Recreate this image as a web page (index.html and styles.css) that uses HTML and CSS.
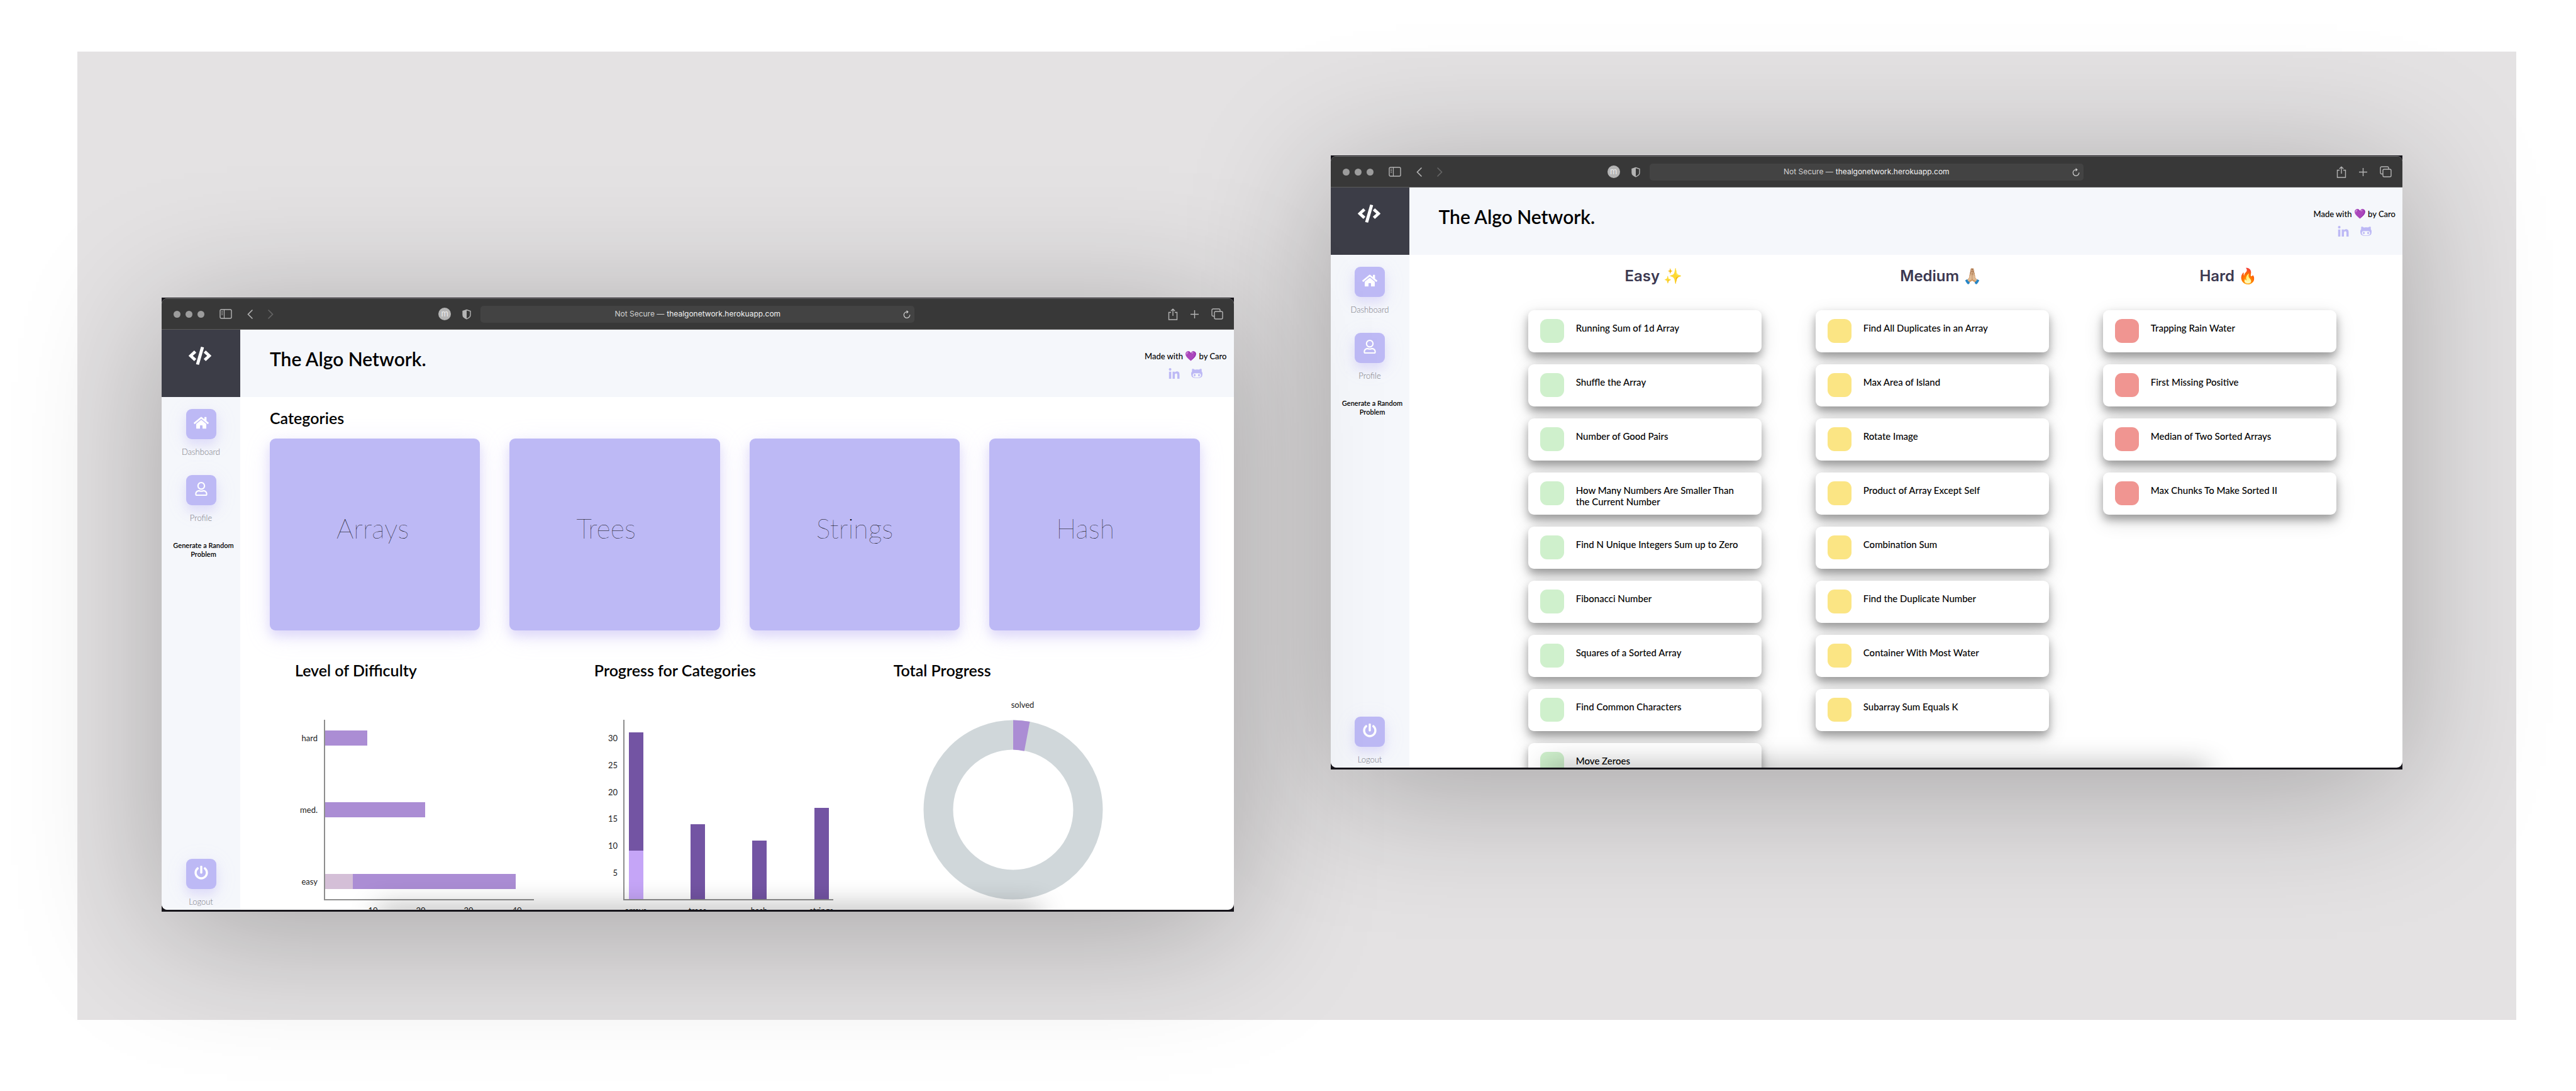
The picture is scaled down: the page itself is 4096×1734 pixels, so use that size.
FILE: index.html
```html
<!DOCTYPE html>
<html lang="en">
<head>
<meta charset="utf-8">
<title>The Algo Network</title>
<link rel="stylesheet" href="styles.css">
</head>
<body>
<svg class="sprite" aria-hidden="true">
  <symbol id="i-panel" viewBox="0 0 20 16"><rect x="1" y="1" width="18" height="14" rx="2" fill="none" stroke="currentColor" stroke-width="1.4"/><path d="M7.5 1v14M3 4h2.4M3 6.5h2.4M3 9h2.4" fill="none" stroke="currentColor" stroke-width="1.2"/></symbol>
  <symbol id="i-back" viewBox="0 0 9 15"><path d="M8 1L1.500 7.500 8 14" fill="none" stroke="currentColor" stroke-width="1.6" stroke-linecap="round"/></symbol>
  <symbol id="i-forward" viewBox="0 0 9 15"><path d="M1 1l6.500 6.500L1 14" fill="none" stroke="currentColor" stroke-width="1.6" stroke-linecap="round"/></symbol>
  <symbol id="i-shield" viewBox="0 0 14 16"><path d="M7 1l6 2v6c0 3-2.500 5-6 6.300C3.500 14 1 12 1 9V3z" fill="none" stroke="currentColor" stroke-width="1.4"/><path d="M7 1v14.300C3.500 14 1 12 1 9V3z" fill="currentColor"/></symbol>
  <symbol id="i-reload" viewBox="0 0 12 13"><path d="M10.800 7.300a4.800 4.800 0 1 1-4.800-4.600h1.500M5.500.6l2.300 2.100-2.300 2.200" fill="none" stroke="currentColor" stroke-width="1.200"/></symbol>
  <symbol id="i-share" viewBox="0 0 16 19"><path d="M5 6.500H1.500v11.500h13V6.500H11M8 12V1.300M4.800 4.300L8 1.200l3.200 3.100" fill="none" stroke="currentColor" stroke-width="1.400"/></symbol>
  <symbol id="i-plus" viewBox="0 0 13 13"><path d="M6.500 0v13M0 6.500h13" stroke="currentColor" stroke-width="1.400"/></symbol>
  <symbol id="i-tabs" viewBox="0 0 19 18"><rect x="5" y="5" width="13" height="12" rx="2" fill="none" stroke="currentColor" stroke-width="1.400"/><path d="M5 12.500H3a2 2 0 0 1-2-2V3a2 2 0 0 1 2-2h9a2 2 0 0 1 2 2v2" fill="none" stroke="currentColor" stroke-width="1.400"/></symbol>
  <symbol id="i-code" viewBox="0 0 640 512"><path fill="currentColor" d="M278.9 511.5l-61-17.7c-6.4-1.8-10-8.5-8.2-14.9L346.2 8.7c1.8-6.4 8.5-10 14.9-8.2l61 17.7c6.4 1.8 10 8.5 8.2 14.9L293.8 503.3c-1.9 6.4-8.5 10.1-14.9 8.2zm-114-112.2l43.5-46.4c4.6-4.9 4.3-12.7-.8-17.2L117 256l90.6-79.7c5.1-4.5 5.5-12.3.8-17.2l-43.5-46.4c-4.5-4.8-12.1-5.1-17-.5L3.8 247.2c-5.1 4.7-5.1 12.8 0 17.5l144.1 135.1c4.9 4.6 12.5 4.4 17-.5zm327.2.6l144.1-135.1c5.1-4.7 5.1-12.8 0-17.5L492.1 112.1c-4.8-4.5-12.4-4.3-17 .5L431.6 159c-4.6 4.9-4.3 12.7.8 17.2L523 256l-90.6 79.7c-5.1 4.5-5.5 12.3-.8 17.2l43.5 46.4c4.500 4.900 12.100 5.100 17 .6z"/></symbol>
  <symbol id="i-home" viewBox="0 0 576 512"><path fill="currentColor" d="M280.37 148.26L96 300.11V464a16 16 0 0 0 16 16l112.06-.29a16 16 0 0 0 15.92-16V368a16 16 0 0 1 16-16h64a16 16 0 0 1 16 16v95.64a16 16 0 0 0 16 16.05L464 480a16 16 0 0 0 16-16V300L295.67 148.26a12.19 12.19 0 0 0-15.3 0zM571.6 251.47L488 182.56V44.05a12 12 0 0 0-12-12h-56a12 12 0 0 0-12 12v72.61L318.47 43a48 48 0 0 0-61 0L4.34 251.47a12 12 0 0 0-1.6 16.9l25.5 31A12 12 0 0 0 45.15 301l235.22-193.74a12.19 12.19 0 0 1 15.3 0L530.9 301a12 12 0 0 0 16.9-1.6l25.5-31a12 12 0 0 0-1.7-16.93z"/></symbol>
  <symbol id="i-user" viewBox="0 0 448 512"><path fill="currentColor" d="M313.6 304c-28.7 0-42.5 16-89.6 16-47.1 0-60.8-16-89.6-16C60.2 304 0 364.2 0 438.4V464c0 26.5 21.5 48 48 48h352c26.5 0 48-21.5 48-48v-25.6c0-74.2-60.2-134.4-134.4-134.4zM400 464H48v-25.6c0-47.6 38.8-86.4 86.4-86.4 14.6 0 38.3 16 89.6 16 51.7 0 74.9-16 89.6-16 47.6 0 86.4 38.8 86.4 86.4V464zM224 288c79.5 0 144-64.5 144-144S303.5 0 224 0 80 64.5 80 144s64.5 144 144 144zm0-240c52.9 0 96 43.1 96 96s-43.1 96-96 96-96-43.1-96-96 43.1-96 96-96z"/></symbol>
  <symbol id="i-power" viewBox="0 0 512 512"><path fill="currentColor" d="M400 54.1c63 45 104 118.6 104 201.9 0 136.8-110.8 247.7-247.5 248C120 504.3 8.2 393 8 256.4 7.9 173.1 48.9 99.3 111.8 54.2c11.7-8.3 28-4.8 35 7.7L162.6 90c5.9 10.5 3.1 23.8-6.6 31-41.5 30.8-68 79.6-68 134.9-.1 92.3 74.5 168.1 168 168.1 91.6 0 168.6-74.2 168-169.1-.3-51.8-24.7-101.8-68.1-134-9.7-7.2-12.4-20.5-6.5-30.9l15.8-28.1c7-12.4 23.2-16.1 34.8-7.8zM296 264V24c0-13.3-10.7-24-24-24h-32c-13.3 0-24 10.7-24 24v240c0 13.3 10.7 24 24 24h32c13.3 0 24-10.7 24-24z"/></symbol>
  <symbol id="i-linkedin" viewBox="0 0 448 448"><path fill="currentColor" d="M100.28 448H7.4V148.9h92.88zM53.79 108.1C24.09 108.1 0 83.5 0 53.8a53.79 53.79 0 0 1 107.58 0c0 29.7-24.1 54.3-53.79 54.3zM447.9 448h-92.68V302.4c0-34.7-.7-79.2-48.29-79.2-48.29 0-55.69 37.7-55.69 76.7V448h-92.78V148.9h89.08v40.8h1.3c12.4-23.5 42.69-48.3 87.88-48.3 94 0 111.28 61.9 111.28 142.3V448z"/></symbol>
  <symbol id="i-github" viewBox="0 32 480 448"><path fill="currentColor" d="M186.1 328.7c0 20.9-10.9 55.1-36.7 55.1s-36.7-34.2-36.7-55.1 10.9-55.1 36.7-55.1 36.7 34.2 36.7 55.1zM480 278.2c0 31.9-3.2 65.7-17.5 95-37.9 76.6-142.1 74.8-216.7 74.8-75.8 0-186.2 2.7-225.6-74.8-14.6-29-20.2-63.1-20.2-95 0-41.9 13.9-81.5 41.5-113.6-5.2-15.8-7.7-32.4-7.7-48.8 0-21.5 4.9-32.3 14.6-51.8 45.3 0 74.3 9 108.8 36 29-6.9 58.8-10 88.7-10 27 0 54.2 2.900 80.4 9.200 34-26.700 63-35.200 107.800-35.200 9.800 19.500 14.600 30.300 14.600 51.800 0 16.400-2.600 32.700-7.700 48.200 27.500 32.400 39 72.300 39 114.200zm-64.300 50.500c0-43.900-26.700-82.600-73.500-82.600-18.900 0-37 3.400-56 6-14.900 2.300-29.800 3.200-45.100 3.200-15.200 0-30.100-.9-45.100-3.200-18.700-2.600-37-6-56-6-46.800 0-73.500 38.700-73.500 82.600 0 87.800 80.400 101.300 150.400 101.300h48.200c70.300 0 150.600-13.400 150.600-101.300zm-82.600-55.100c-25.800 0-36.700 34.200-36.700 55.100s10.900 55.100 36.700 55.100 36.700-34.200 36.700-55.100-10.900-55.100-36.700-55.100z"/></symbol>
</svg>

<main class="board">

  <section class="window window-dashboard">
    <div class="browser">
      <div class="toolbar">
        <div class="tools tools-left">
          <span class="lights"><i></i><i></i><i></i></span>
          <button class="tool tool-panel" aria-label="Show sidebar"><svg width="20" height="16"><use href="#i-panel"/></svg></button>
          <button class="tool tool-arrow" aria-label="Back"><svg width="9" height="15"><use href="#i-back"/></svg></button>
          <button class="tool tool-arrow tool-dim" aria-label="Forward" disabled><svg width="9" height="15"><use href="#i-forward"/></svg></button>
          <span class="extension">m</span>
          <button class="tool tool-shield" aria-label="Privacy report"><svg width="14" height="17"><use href="#i-shield"/></svg></button>
        </div>
        <div class="address">
          <label for="url-dashboard">Not Secure —</label>
          <input id="url-dashboard" type="text" value="thealgonetwork.herokuapp.com">
          <button class="tool reload" aria-label="Reload"><svg width="12" height="13"><use href="#i-reload"/></svg></button>
        </div>
        <div class="tools tools-right">
          <button class="tool" aria-label="Share"><svg width="16" height="19"><use href="#i-share"/></svg></button>
          <button class="tool" aria-label="New tab"><svg width="13" height="13"><use href="#i-plus"/></svg></button>
          <button class="tool" aria-label="Tab overview"><svg width="19" height="18"><use href="#i-tabs"/></svg></button>
        </div>
      </div>
      <div class="app">
        <a class="logo" href="#" aria-label="Home"><svg width="36" height="29"><use href="#i-code"/></svg></a>
        <header class="header">
          <h1>The Algo Network.</h1>
          <div class="credits">
            <p>Made with <span class="emoji">💜</span> by Caro</p>
            <div class="social">
              <a href="#" aria-label="LinkedIn"><svg width="18" height="17"><use href="#i-linkedin"/></svg></a>
              <a href="#" aria-label="GitHub"><svg width="18" height="17"><use href="#i-github"/></svg></a>
            </div>
          </div>
        </header>
        <nav class="sidebar">
          <a class="nav-item" href="#"><span class="nav-icon"><svg width="24" height="22"><use href="#i-home"/></svg></span>Dashboard</a>
          <a class="nav-item" href="#"><span class="nav-icon"><svg width="20" height="22"><use href="#i-user"/></svg></span>Profile</a>
          <a class="random" href="#">Generate a Random Problem</a>
          <a class="nav-item nav-logout" href="#"><span class="nav-icon"><svg width="22" height="22"><use href="#i-power"/></svg></span>Logout</a>
        </nav>
        <div class="content dashboard">
          <h2>Categories</h2>
          <div class="categories">
            <a class="category" href="#">Arrays</a>
            <a class="category" href="#">Trees</a>
            <a class="category" href="#">Strings</a>
            <a class="category" href="#">Hash</a>
          </div>
          <div class="charts">
            <section>
              <h2>Level of Difficulty</h2>
              <svg class="chart" width="475" height="380">
                <g class="bar-total"><rect x="47" y="82" width="68" height="24"/><rect x="47" y="196" width="160" height="24"/><rect x="92" y="310" width="259" height="24"/></g>
                <rect class="bar-solved" x="47" y="310" width="45" height="24"/>
                <path class="axis" d="M47 65V351H380"/>
                <g class="end"><text x="36" y="99">hard</text><text x="36" y="213">med.</text><text x="36" y="327">easy</text></g>
                <g class="mid"><text x="124" y="373">10</text><text x="200" y="373">20</text><text x="276" y="373">30</text><text x="353" y="373">40</text></g>
              </svg>
            </section>
            <section>
              <h2>Progress for Categories</h2>
              <svg class="chart" width="475" height="380">
                <g class="col-total"><rect x="55" y="85" width="23" height="188"/><rect x="153" y="231" width="23" height="120"/><rect x="251" y="257" width="23" height="94"/><rect x="350" y="205" width="23" height="146"/></g>
                <rect class="col-solved" x="55" y="273" width="23" height="78"/>
                <path class="axis" d="M47 65V351H380"/>
                <g class="end"><text x="37" y="99">30</text><text x="37" y="142">25</text><text x="37" y="185">20</text><text x="37" y="227">15</text><text x="37" y="270">10</text><text x="37" y="313">5</text></g>
                <g class="mid"><text x="66" y="373">arrays</text><text x="164" y="373">trees</text><text x="262" y="373">hash</text><text x="361" y="373">strings</text></g>
              </svg>
            </section>
            <section>
              <h2>Total Progress</h2>
              <svg class="chart" width="475" height="380">
                <circle class="ring" cx="190" cy="208" r="119"/>
                <path class="slice" d="M190 65.500A142.500 142.500 0 0 1 216.500 68L207.700 114.700A95.500 95.500 0 0 0 190 112.500Z"/>
                <g class="mid"><text x="205" y="46">solved</text></g>
              </svg>
            </section>
          </div>
        </div>
      </div>
      <div class="dock"></div>
    </div>
  </section>

  <section class="window window-problems">
    <div class="browser">
      <div class="toolbar">
        <div class="tools tools-left">
          <span class="lights"><i></i><i></i><i></i></span>
          <button class="tool tool-panel" aria-label="Show sidebar"><svg width="20" height="16"><use href="#i-panel"/></svg></button>
          <button class="tool tool-arrow" aria-label="Back"><svg width="9" height="15"><use href="#i-back"/></svg></button>
          <button class="tool tool-arrow tool-dim" aria-label="Forward" disabled><svg width="9" height="15"><use href="#i-forward"/></svg></button>
          <span class="extension">m</span>
          <button class="tool tool-shield" aria-label="Privacy report"><svg width="14" height="17"><use href="#i-shield"/></svg></button>
        </div>
        <div class="address">
          <label for="url-problems">Not Secure —</label>
          <input id="url-problems" type="text" value="thealgonetwork.herokuapp.com">
          <button class="tool reload" aria-label="Reload"><svg width="12" height="13"><use href="#i-reload"/></svg></button>
        </div>
        <div class="tools tools-right">
          <button class="tool" aria-label="Share"><svg width="16" height="19"><use href="#i-share"/></svg></button>
          <button class="tool" aria-label="New tab"><svg width="13" height="13"><use href="#i-plus"/></svg></button>
          <button class="tool" aria-label="Tab overview"><svg width="19" height="18"><use href="#i-tabs"/></svg></button>
        </div>
      </div>
      <div class="app">
        <a class="logo" href="#" aria-label="Home"><svg width="36" height="29"><use href="#i-code"/></svg></a>
        <header class="header">
          <h1>The Algo Network.</h1>
          <div class="credits">
            <p>Made with <span class="emoji">💜</span> by Caro</p>
            <div class="social">
              <a href="#" aria-label="LinkedIn"><svg width="18" height="17"><use href="#i-linkedin"/></svg></a>
              <a href="#" aria-label="GitHub"><svg width="18" height="17"><use href="#i-github"/></svg></a>
            </div>
          </div>
        </header>
        <nav class="sidebar">
          <a class="nav-item" href="#"><span class="nav-icon"><svg width="24" height="22"><use href="#i-home"/></svg></span>Dashboard</a>
          <a class="nav-item" href="#"><span class="nav-icon"><svg width="20" height="22"><use href="#i-user"/></svg></span>Profile</a>
          <a class="random" href="#">Generate a Random Problem</a>
          <a class="nav-item nav-logout" href="#"><span class="nav-icon"><svg width="22" height="22"><use href="#i-power"/></svg></span>Logout</a>
        </nav>
        <div class="content problems">
          <section class="level level-easy">
            <h2>Easy <span class="emoji">✨</span></h2>
            <ul>
              <li><a href="#">Running Sum of 1d Array</a></li>
              <li><a href="#">Shuffle the Array</a></li>
              <li><a href="#">Number of Good Pairs</a></li>
              <li><a href="#">How Many Numbers Are Smaller Than the Current Number</a></li>
              <li><a href="#">Find N Unique Integers Sum up to Zero</a></li>
              <li><a href="#">Fibonacci Number</a></li>
              <li><a href="#">Squares of a Sorted Array</a></li>
              <li><a href="#">Find Common Characters</a></li>
              <li><a href="#">Move Zeroes</a></li>
            </ul>
          </section>
          <section class="level level-medium">
            <h2>Medium <span class="emoji">🙏🏼</span></h2>
            <ul>
              <li><a href="#">Find All Duplicates in an Array</a></li>
              <li><a href="#">Max Area of Island</a></li>
              <li><a href="#">Rotate Image</a></li>
              <li><a href="#">Product of Array Except Self</a></li>
              <li><a href="#">Combination Sum</a></li>
              <li><a href="#">Find the Duplicate Number</a></li>
              <li><a href="#">Container With Most Water</a></li>
              <li><a href="#">Subarray Sum Equals K</a></li>
            </ul>
          </section>
          <section class="level level-hard">
            <h2>Hard <span class="emoji">🔥</span></h2>
            <ul>
              <li><a href="#">Trapping Rain Water</a></li>
              <li><a href="#">First Missing Positive</a></li>
              <li><a href="#">Median of Two Sorted Arrays</a></li>
              <li><a href="#">Max Chunks To Make Sorted II</a></li>
            </ul>
          </section>
        </div>
      </div>
      <div class="dock"></div>
    </div>
  </section>

</main>
</body>
</html>
```

FILE: styles.css
```css
* { box-sizing: border-box; }

body {
  margin: 0;
  padding: 82px 95px 112px 123px;
  background: #fff;
  color: #000;
  font-family: Lato, "Liberation Sans", sans-serif;
  overflow-x: hidden;
}

h1, h2, p, ul { margin: 0; padding: 0; }
ul { list-style: none; }
a { color: inherit; text-decoration: none; }
button { margin: 0; padding: 0; border: 0; background: none; color: inherit; }
svg { display: block; }
.sprite { position: absolute; width: 0; height: 0; }

/* Board with the two windows */
.board {
  display: grid;
  grid-template-columns: 1fr 1fr;
  gap: 154px;
  align-items: start;
  padding: 165px 181px 172px 134px;
  background: #e4e2e3;
}

.window {
  aspect-ratio: 1704 / 976;
  padding: 1px 0 3px;
  background: #17151b;
  box-shadow: 0 30px 210px rgba(0, 0, 0, 0.28);
}

.window-dashboard {
  position: relative;
  z-index: 1;
  margin-top: 226px;
}

.browser {
  position: relative;
  display: flex;
  flex-direction: column;
  height: 100%;
  border-radius: 9px;
  background: #fff;
  overflow: hidden;
}

/* Browser toolbar */
.toolbar {
  display: grid;
  grid-template-columns: 1fr 690px 1fr;
  align-items: center;
  flex: none;
  height: 50px;
  border-top: 1px solid #757575;
  border-bottom: 1px solid #5c5c5c;
  background: #383838;
  color: #b4b4b4;
}

.tools { display: flex; align-items: center; }
.tools-left { padding: 0 15px 0 19px; }
.tools-right { justify-content: flex-end; gap: 20px; padding-right: 17px; }

.lights { display: flex; gap: 8px; }
.lights i { width: 11px; height: 11px; border-radius: 50%; background: #9c9c9c; }

.tool-panel, .tool-arrow { margin-left: 24px; }
.tool-dim { color: #656565; }

.extension {
  width: 20px;
  height: 20px;
  margin-left: auto;
  border-radius: 50%;
  background: #b5b5b5;
  color: #ececec;
  font: 13px/18px Inter, sans-serif;
  text-align: center;
}

.tool-shield { margin-left: 18px; }

.address {
  position: relative;
  display: flex;
  justify-content: center;
  align-items: center;
  gap: 4px;
  height: 27px;
  border-radius: 5px;
  background: #434343;
  color: #d0d0d0;
  font: 12px/16px Inter, sans-serif;
}

.address input {
  field-sizing: content;
  padding: 0;
  border: 0;
  background: none;
  color: #f2f2f2;
  font: inherit;
  outline: 0;
}

.reload { position: absolute; right: 6px; }

/* App shell */
.app {
  display: grid;
  grid-template: 107px minmax(0, 1fr) / 125px minmax(0, 1fr);
  flex: 1;
  min-height: 0;
}

.logo {
  display: flex;
  justify-content: center;
  padding: 27px 3px 0 0;
  background: #3c3d47;
  color: #fff;
}

.header {
  display: flex;
  justify-content: space-between;
  align-items: flex-start;
  padding: 28px 11px 0 47px;
  background: #f5f7fb;
}

h1 { font-size: 30px; line-height: 36px; font-weight: 600; }

.credits {
  display: grid;
  justify-items: center;
  gap: 11px;
  padding-top: 5px;
  font-size: 13px;
  line-height: 16px;
  font-weight: 500;
}

.credits .emoji { font-size: 15px; }

.social { display: flex; gap: 18px; color: #bdb9f5; }

.sidebar {
  display: flex;
  flex-direction: column;
  padding: 19px 0 5px;
  background: #f5f7fb;
}

.nav-item {
  display: grid;
  justify-items: center;
  gap: 12px;
  margin-bottom: 29px;
  color: #77777f;
  font-size: 13px;
  line-height: 16px;
  font-weight: 300;
}

.nav-icon {
  display: grid;
  place-items: center;
  width: 48px;
  height: 48px;
  padding-bottom: 4px;
  border-radius: 9px;
  background: #bdb9f5;
  color: #fff;
  box-shadow: 0 9px 16px rgba(190, 180, 245, 0.35), 0 6px 36px rgba(190, 180, 245, 0.12);
}

.random {
  padding: 0 8px 0 16px;
  font-size: 11px;
  line-height: 14px;
  font-weight: 600;
  text-align: center;
}

.nav-logout { margin: auto 0 0; }

/* Dashboard */
.content { overflow: hidden; }
.dashboard { padding: 19px 54px 0 47px; }
.dashboard h2 { font-size: 25px; line-height: 28px; font-weight: 600; }

.categories {
  display: grid;
  grid-template-columns: repeat(4, 1fr);
  gap: 47px;
  margin-top: 19px;
}

.category {
  display: flex;
  align-items: center;
  height: 305px;
  padding: 0 0 20px 106px;
  border-radius: 9px;
  background: #bdb9f5;
  color: #000;
  font-size: 43px;
  line-height: 48px;
  font-weight: 200;
  box-shadow: 0 9px 18px rgba(190, 180, 245, 0.45), 0 8px 40px rgba(190, 180, 245, 0.2);
}

.charts {
  display: grid;
  grid-template-columns: repeat(3, 1fr);
  margin-top: 49px;
  padding: 0 11px 0 40px;
}

.chart text { fill: #222; font-size: 13px; }
.chart .end { text-anchor: end; }
.chart .mid { text-anchor: middle; }
.axis { fill: none; stroke: #8e8e8e; stroke-width: 2; }
.bar-total, .slice { fill: #ab8dd4; }
.bar-solved { fill: #d4bfd7; }
.col-total { fill: #7354a3; }
.col-solved { fill: #c5a5f7; }
.ring { fill: none; stroke: #d0d7da; stroke-width: 47; }

/* Problem lists */
.problems {
  display: grid;
  grid-template-columns: repeat(3, 371px);
  justify-content: center;
  align-items: start;
  gap: 86px;
  padding: 20px 0 0 84px;
}

.level h2 {
  height: 28px;
  padding-left: 28px;
  color: #3b3850;
  font: 600 24px/28px Inter, sans-serif;
  text-align: center;
}

.level ul { display: grid; gap: 19px; margin-top: 40px; }

.level a {
  display: flex;
  gap: 19px;
  height: 67px;
  padding: 19px 25px 0 19px;
  border-radius: 9px;
  background: #fff;
  font-size: 15px;
  line-height: 18px;
  font-weight: 500;
  box-shadow: 0 8px 14px rgba(0, 0, 0, 0.32), 0 10px 32px rgba(0, 0, 0, 0.14);
}

.level a::before {
  content: "";
  flex: none;
  width: 38px;
  height: 38px;
  margin-top: -5px;
  border-radius: 11px;
  background: #cff0cc;
}

.level-medium a::before { background: #fbe584; }
.level-hard a::before { background: #f09591; }

/* Shade that the system dock throws on the lower edge */
.dock {
  position: absolute;
  left: 20%;
  right: 18%;
  bottom: -20px;
  height: 20px;
  border-radius: 9px;
  box-shadow: 0 0 44px rgba(0, 0, 0, 0.45);
}
```
